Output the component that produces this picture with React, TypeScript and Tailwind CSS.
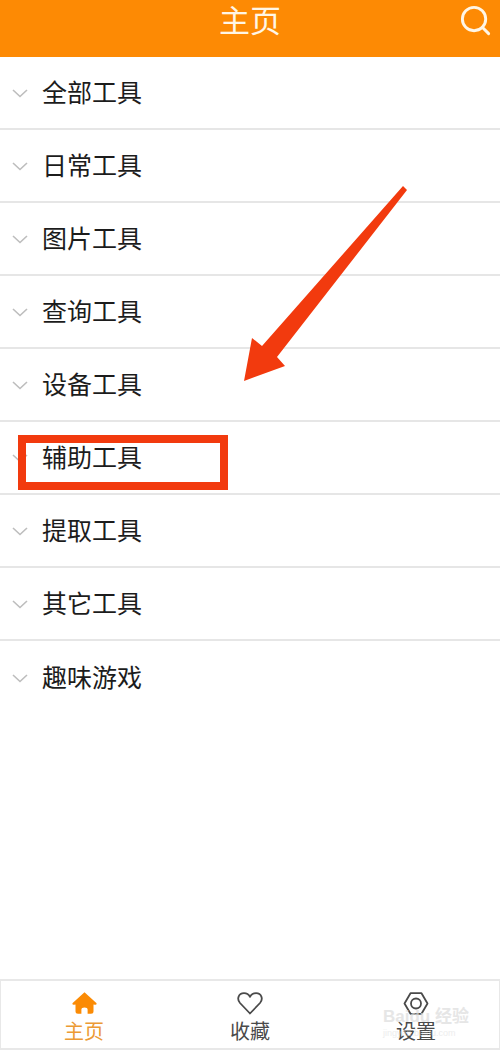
import { Search } from "lucide-react";

const rows = ["全部工具", "日常工具", "图片工具", "查询工具", "设备工具", "辅助工具", "提取工具", "其它工具", "趣味游戏"];

const font = "font-['Liberation_Sans','Noto_Sans_CJK_SC',sans-serif]";

function Chevron() {
    return (
        <svg className="mr-[14px] mt-[2px] shrink-0" width="16" height="9" viewBox="0 0 16 9" fill="none" stroke="#bdbdbd" strokeWidth="1.6">
            <path d="M1 1 L8 7.5 L15 1" />
        </svg>
    );
}

function HomeIcon() {
    return (
        <svg width="25" height="22" viewBox="0 0 25 22">
            <path
                d="M12.5 0.3 L24.6 11.3 Q24.8 13 23 12.8 L21.5 12.4 L21.5 19.2 Q21.5 21.7 19 21.7 L15.6 21.7 L15.6 17.4 Q15.6 15.4 12.5 15.4 Q9.4 15.4 9.4 17.4 L9.4 21.7 L6 21.7 Q3.5 21.7 3.5 19.2 L3.5 12.4 L2 12.8 Q0.2 13 0.4 11.3 Z"
                fill="#fb8b05"
            />
        </svg>
    );
}

function HeartIcon() {
    return (
        <svg width="26" height="23" viewBox="0 0 26 23" fill="none" stroke="#4a4a4a" strokeWidth="1.8">
            <path d="M13 21.5 L3 11 C-0.5 7 1.5 1.2 7 1.2 C9.7 1.2 11.8 2.7 13 4.9 C14.2 2.7 16.3 1.2 19 1.2 C24.5 1.2 26.5 7 23 11 Z" strokeLinejoin="round" />
        </svg>
    );
}

function SettingsIcon() {
    return (
        <svg width="26" height="23" viewBox="0 0 26 23" fill="none" stroke="#4a4a4a" strokeWidth="1.8">
            <path d="M7.5 1.2 L18.5 1.2 L24.5 11.5 L18.5 21.8 L7.5 21.8 L1.5 11.5 Z" strokeLinejoin="round" />
            <circle cx="13" cy="11.5" r="5" />
        </svg>
    );
}

export default function App() {
    return (
        <div className={`relative flex h-[1050px] w-[500px] flex-col overflow-hidden bg-white ${font}`}>
            <header className="relative flex h-[57px] shrink-0 items-center justify-center bg-[#fd8a04]">
                <span className="pb-[15px] text-[31px] leading-none text-[#fff6e6]">主页</span>
                <Search className="absolute right-[7px] top-[3px] text-[#fff6e6]" size={35} strokeWidth={2} />
            </header>

            <main className="flex-1">
                {rows.map((name, i) => (
                    <div
                        key={name}
                        className={`flex h-[73px] items-center pl-[12px] ${i < rows.length - 1 ? "border-b-2 border-[#e6e6e6]" : ""}`}
                    >
                        <Chevron />
                        <span className="pt-[2px] text-[25px] leading-none text-[#1c1c1c]">{name}</span>
                    </div>
                ))}
            </main>

            <nav className="grid h-[71px] shrink-0 grid-cols-3 border-x border-y-2 border-[#e8e8e8] bg-white">
                <div className="flex flex-col items-center pt-[11px] text-[#ec9a34]">
                    <HomeIcon />
                    <span className="mt-[6px] text-[20px] leading-[24px]">主页</span>
                </div>
                <div className="flex flex-col items-center pt-[11px] text-[#4a4a4a]">
                    <HeartIcon />
                    <span className="mt-[5px] text-[20px] leading-[24px]">收藏</span>
                </div>
                <div className="flex flex-col items-center pt-[11px] text-[#4a4a4a]">
                    <SettingsIcon />
                    <span className="mt-[5px] text-[20px] leading-[24px]">设置</span>
                </div>
            </nav>

            {/* annotations drawn over the screenshot */}
            <div className="absolute left-[18px] top-[435px] h-[55px] w-[210px] border-[8px] border-[#f23a0e]" />
            <svg className="absolute left-0 top-0" width="500" height="1050" viewBox="0 0 500 1050" fill="none">
                <polygon points="403,186 407,190 277,357 285,366 244,381 252,338 262,346" fill="#f23a0e" />
            </svg>
            <div className="absolute left-[383px] top-[1008px] flex flex-col text-[#dcdcdc]">
                <span className="whitespace-nowrap text-[17px] font-bold leading-[18px] opacity-70">Baidu 经验</span>
                <span className="text-[9px] leading-[14px] opacity-50">jingyan.baidu.com</span>
            </div>
        </div>
    );
}
